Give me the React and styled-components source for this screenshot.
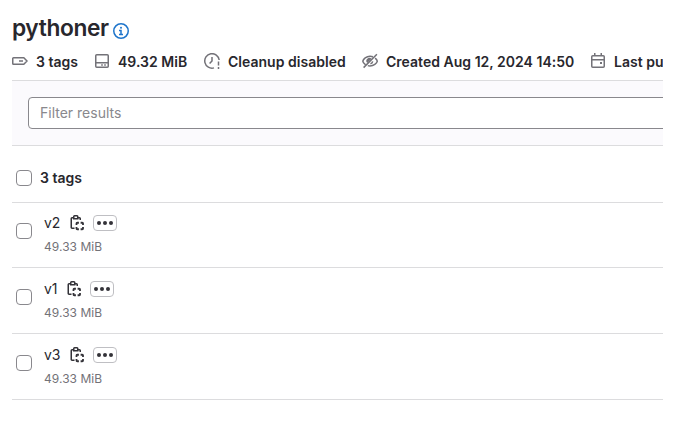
import React from "react";
import styled, { createGlobalStyle } from "styled-components";

const GlobalStyle = createGlobalStyle`
  * { box-sizing: border-box; }
  body {
    margin: 0;
    background: #fff;
    color: #28272d;
    font-family: Inter, "Noto Sans", sans-serif;
    font-size: 14px;
    line-height: 20px;
    overflow: hidden;
  }
`;

const Page = styled.main`
  width: 651px;
  height: 423px;
  margin-left: 12px;
  overflow: hidden;
`;

const TitleRow = styled.div`
  display: flex;
  align-items: center;
  gap: 5px;
  height: 52px;
  padding-top: 4px;
`;

const Title = styled.h1`
  width: 96px;
  margin: 0;
  font-size: 22.75px;
  line-height: 28px;
  font-weight: 580;
  letter-spacing: -0.4px;
  white-space: nowrap;
`;

const InfoIcon = styled.svg`
  display: block;
  margin-top: 5px;
  color: #1f75cb;
`;

const Metadata = styled.div`
  display: flex;
  gap: 16px;
  height: 28px;
`;

const MetaItem = styled.div`
  display: flex;
  flex: none;
  align-items: center;
  gap: 8px;
  width: ${(p) => p.$width}px;
  height: 20px;
  font-weight: 600;
  letter-spacing: 0.02px;
  white-space: nowrap;
`;

const MetaIcon = styled.svg`
  display: block;
  flex: none;
  color: #737278;
  margin-top: -2px;
`;

const FilterBar = styled.div`
  height: 66px;
  padding: 16px 0 0 16px;
  background: #fbfafd;
  border-top: 1px solid #dcdcde;
  border-bottom: 1px solid #dcdcde;
`;

const FilterInput = styled.input`
  display: block;
  width: 700px;
  height: 32px;
  padding: 0 11px 1px;
  border: 1px solid #89888d;
  border-radius: 4px;
  background: #fff;
  font: inherit;
  color: #28272d;
  &::placeholder { color: #89888d; opacity: 1; }
`;

const ListHeader = styled.div`
  display: flex;
  align-items: center;
  gap: 8px;
  height: 57px;
  padding: 8px 4px 0;
  border-bottom: 1px solid #dcdcde;
  font-weight: 600;
`;

const Checkbox = styled.input`
  appearance: none;
  flex: none;
  width: 16px;
  height: 16px;
  margin: 0;
  border: 1px solid #89888d;
  border-radius: 4px;
  background: #fff;
`;

const Row = styled.div`
  display: flex;
  align-items: flex-start;
  gap: 12px;
  height: ${(p) => p.$height}px;
  padding: ${(p) => p.$height - 55}px 4px 0;
  border-bottom: 1px solid #dcdcde;

  ${Checkbox} { margin-top: 10px; }
`;

const NameLine = styled.div`
  display: flex;
  align-items: center;
  height: 20px;
`;

const TagName = styled.span`
  width: ${(p) => p.$width}px;
  margin-right: 8px;
`;

const CopyIcon = styled.svg`
  display: block;
  margin-right: 8px;
  color: #333238;
`;

const MoreButton = styled.button`
  display: flex;
  align-items: center;
  justify-content: center;
  width: 24px;
  height: 16px;
  padding: 0;
  border: 1px solid #bfbfc3;
  border-radius: 4px;
  background: #fff;
  color: #333238;
`;

const Size = styled.div`
  margin-top: 5px;
  font-size: 12px;
  line-height: 18px;
  letter-spacing: 0.04px;
  color: #737278;
`;

const stroke = { fill: "none", stroke: "currentColor", strokeWidth: 1.5 };

const Icon = ({ children }) => (
  <MetaIcon width="16" height="16" viewBox="0 0 16 16" {...stroke}>
    {children}
  </MetaIcon>
);

const icons = {
  tag: (
    <>
      <path d="M1.5 4.75h10.3L15 8l-3.2 3.25H1.5a.75.75 0 0 1-.75-.75v-5a.75.75 0 0 1 .75-.75Z" />
      <path d="M7 8h4" />
    </>
  ),
  disk: (
    <>
      <rect x="1.75" y="1.75" width="12.5" height="12.5" rx="1" />
      <path d="M1.75 9.75h12.5M7.2 12h1.6M10.2 12h1.6" />
    </>
  ),
  expire: (
    <>
      <path d="M10 14.9A7.25 7.25 0 1 1 15.2 7M8 4v4l-2.4 2.6" />
      <path d="M14.5 8.5v4M14.5 14v2" />
    </>
  ),
  eyeSlash: (
    <>
      <path d="M3.4 11.7C1.8 10.6.9 9 .8 8.2 1.3 6 4.3 3.2 8 3.2c1 0 2 .2 2.9.6M13.1 5.1c1.2.9 2 2.1 2.2 3.1-.5 2.1-3.6 4.7-7.3 4.7-.8 0-1.5-.1-2.2-.3M1.6 14.6 14.9 1.3" />
      <path d="M5.3 10A3 3 0 0 1 9.6 5.7Z" fill="currentColor" stroke="none" />
      <path d="M10.7 8.4A2.8 2.8 0 0 1 8.4 10.7" />
    </>
  ),
  calendar: (
    <>
      <rect x="1.75" y="2.75" width="12.5" height="11.5" rx="1" />
      <path d="M1.75 6.75h12.5M4.75 0v3M11.25 0v3" />
      <path d="M10 10h2" strokeWidth="2" />
    </>
  ),
};

const metadata = [
  { icon: "tag", text: "3 tags", width: 66 },
  { icon: "disk", text: "49.32 MiB", width: 94 },
  { icon: "expire", text: "Cleanup disabled", width: 142 },
  { icon: "eyeSlash", text: "Created Aug 12, 2024 14:50", width: 212 },
  { icon: "calendar", text: "Last pu", width: 73 },
];

const tags = [
  { name: "v2", height: 65, nameWidth: 17 },
  { name: "v1", height: 66, nameWidth: 14 },
  { name: "v3", height: 66, nameWidth: 17 },
];

const Clipboard = () => (
  <CopyIcon width="16" height="16" viewBox="0 0 16 16" {...stroke}>
    <path d="M5.5 13.25H3a.75.75 0 0 1-.75-.75v-9A.75.75 0 0 1 3 2.75h1.5M9 2.75h1.5a.75.75 0 0 1 .75.75V5" />
    <path d="M4.75 1.5a.75.75 0 0 1 .75-.75H8a.75.75 0 0 1 .75.75v2.25h-4Z" />
    <path
      d="M9.9 7.75H8.25a.75.75 0 0 0-.75.75v1.6M11.6 7.75h1.65a.75.75 0 0 1 .75.75v1.6M7.5 11.9v1.6a.75.75 0 0 0 .75.75H9.9M11.6 14.25h1.65a.75.75 0 0 0 .75-.75v-1.6"
      strokeWidth="1.8"
    />
  </CopyIcon>
);

export default function App() {
  return (
    <>
      <GlobalStyle />
      <Page>
        <TitleRow>
          <Title>pythoner</Title>
          <InfoIcon width="16" height="16" viewBox="0 0 16 16" {...stroke}>
            <circle cx="8" cy="8" r="7.25" />
            <path d="M6 7.5h2v4M6 11.5h4" />
            <circle cx="8" cy="4.8" r="1" fill="currentColor" stroke="none" />
          </InfoIcon>
        </TitleRow>
        <Metadata>
          {metadata.map((m) => (
            <MetaItem key={m.icon} $width={m.width}>
              <Icon>{icons[m.icon]}</Icon>
              {m.text}
            </MetaItem>
          ))}
        </Metadata>
        <FilterBar>
          <FilterInput placeholder="Filter results" />
        </FilterBar>
        <ListHeader>
          <Checkbox type="checkbox" />
          3 tags
        </ListHeader>
        {tags.map((t) => (
          <Row key={t.name} $height={t.height}>
            <Checkbox type="checkbox" />
            <div>
              <NameLine>
                <TagName $width={t.nameWidth}>{t.name}</TagName>
                <Clipboard />
                <MoreButton aria-label="More details">
                  <svg width="16" height="6" viewBox="0 0 16 6" fill="currentColor">
                    <circle cx="2" cy="3" r="2" />
                    <circle cx="8" cy="3" r="2" />
                    <circle cx="14" cy="3" r="2" />
                  </svg>
                </MoreButton>
              </NameLine>
              <Size>49.33 MiB</Size>
            </div>
          </Row>
        ))}
      </Page>
    </>
  );
}
